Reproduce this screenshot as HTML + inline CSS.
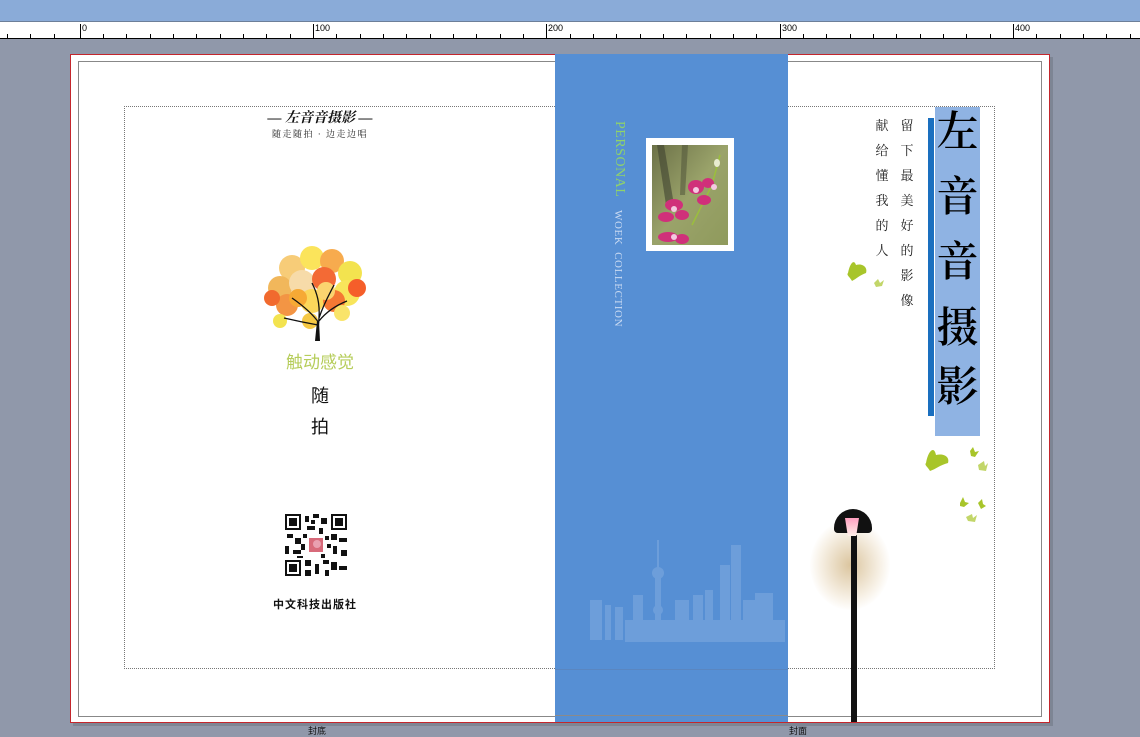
<!DOCTYPE html>
<html><head><meta charset="utf-8"><style>
*{margin:0;padding:0;box-sizing:border-box}
body{width:1140px;height:737px;overflow:hidden;background:#9098aa;position:relative;font-family:"Liberation Serif","Noto Serif CJK SC",serif}
.a{position:absolute}
.v{position:absolute;font-size:13px;line-height:25px;width:16px;text-align:center;color:#222}
.big{position:absolute;left:935px;width:45px;text-align:center;font-size:42px;line-height:65px;color:#000;font-weight:600;font-family:"Noto Serif CJK SC",serif}
</style></head><body>
<div class="a" style="left:0;top:0;width:1140px;height:21px;background:#8aabd8"></div>
<div class="a" style="left:0;top:21px;width:1140px;height:1px;background:#6d7f99"></div>
<svg class="a" style="left:0;top:22px" width="1140" height="17">
<rect width="1140" height="17" fill="#fff"/>
<line x1="0" y1="16.5" x2="1140" y2="16.5" stroke="#000"/>
<g stroke="#000" stroke-width="1">
<path d="M7.5 12V16M30.5 12V16M54.5 12V16M103.5 12V16M126.5 12V16M150.5 12V16M173.5 12V16M196.5 12V16M220.5 12V16M243.5 12V16M266.5 12V16M290.5 12V16M336.5 12V16M360.5 12V16M383.5 12V16M406.5 12V16M430.5 12V16M453.5 12V16M476.5 12V16M500.5 12V16M523.5 12V16M570.5 12V16M593.5 12V16M616.5 12V16M640.5 12V16M663.5 12V16M686.5 12V16M710.5 12V16M733.5 12V16M756.5 12V16M803.5 12V16M826.5 12V16M850.5 12V16M873.5 12V16M896.5 12V16M920.5 12V16M943.5 12V16M966.5 12V16M990.5 12V16M1036.5 12V16M1060.5 12V16M1083.5 12V16M1106.5 12V16M1130.5 12V16"/>
<path d="M80.5 2V16M313.5 2V16M546.5 2V16M780.5 2V16M1013.5 2V16"/>
</g>
<g font-family="Liberation Sans" font-size="9" fill="#000"><text x="82" y="9">0</text><text x="315" y="9">100</text><text x="548" y="9">200</text><text x="782" y="9">300</text><text x="1015" y="9">400</text></g>
</svg>
<div class="a" style="left:73px;top:57px;width:980px;height:669px;background:#7d8594"></div>
<div class="a" style="left:70px;top:54px;width:980px;height:669px;background:#fff;border:1.5px solid #c4262c"></div>
<div class="a" style="left:78px;top:61px;width:964px;height:656px;border:1px solid #888"></div>
<div class="a" style="left:124px;top:106px;width:871px;height:563px;border:1px dotted #777"></div>
<div class="a" style="left:555px;top:54px;width:233px;height:668px;background:#568fd4"></div>
<div class="a" style="left:555px;top:669px;width:233px;height:1px;background:#5a86c0"></div>
<div class="a" style="left:555px;top:715px;width:233px;height:1px;background:#8a8a8a"></div>
<div class="a" style="left:555px;top:722px;width:233px;height:1px;background:#c4262c"></div>
<div class="a" style="left:611px;top:121px;font-size:14px;color:#8fd36a;writing-mode:vertical-rl;letter-spacing:0.5px">PERSONAL</div>
<div class="a" style="left:612px;top:210px;font-size:11px;color:#c9daf2;writing-mode:vertical-rl;letter-spacing:0.6px">WOEK&nbsp;&nbsp;COLLECTION</div>
<div class="a" style="left:646px;top:138px;width:88px;height:113px;background:#fff"></div>
<svg class="a" style="left:652px;top:145px" width="76" height="100">
<defs><linearGradient id="bg" x1="0" y1="0" x2="1" y2="1"><stop offset="0" stop-color="#6c7148"/><stop offset=".5" stop-color="#9aa36a"/><stop offset="1" stop-color="#8f9a5c"/></linearGradient></defs>
<rect width="76" height="100" fill="url(#bg)"/>
<path d="M5 0 L12 0 L22 60 L14 60Z" fill="#3f4230" opacity=".6"/>
<path d="M30 0 L36 0 L33 50 L28 50Z" fill="#4a4d35" opacity=".5"/>
<path d="M68 10 L60 40 L40 80" stroke="#9bbf3c" stroke-width="1.5" fill="none"/>
<g fill="#d0307a"><ellipse cx="22" cy="60" rx="9" ry="6"/><ellipse cx="14" cy="72" rx="8" ry="5"/><ellipse cx="30" cy="70" rx="7" ry="5"/><ellipse cx="44" cy="42" rx="8" ry="7"/><ellipse cx="52" cy="55" rx="7" ry="5"/><ellipse cx="56" cy="38" rx="6" ry="5"/><ellipse cx="16" cy="92" rx="10" ry="5"/><ellipse cx="30" cy="94" rx="7" ry="5"/></g>
<g fill="#f3c9e0"><circle cx="22" cy="64" r="3"/><circle cx="44" cy="45" r="3"/><circle cx="62" cy="42" r="3"/><circle cx="22" cy="92" r="3"/></g>
<ellipse cx="65" cy="18" rx="3" ry="4" fill="#e8eccf"/>
</svg>
<svg class="a" style="left:585px;top:535px" width="203" height="110" opacity=".2">
<g fill="#c8dcf6">
<rect x="20" y="70" width="6" height="35"/><rect x="5" y="65" width="12" height="40"/><rect x="30" y="72" width="8" height="33"/>
<rect x="48" y="60" width="10" height="45"/><rect x="72" y="5" width="2" height="45"/><circle cx="73" cy="38" r="6"/><rect x="70" y="40" width="6" height="65"/><circle cx="73" cy="75" r="5"/>
<rect x="90" y="65" width="14" height="40"/><rect x="108" y="60" width="10" height="45"/><rect x="120" y="55" width="8" height="50"/>
<rect x="135" y="30" width="10" height="75"/><rect x="146" y="10" width="10" height="95"/><rect x="158" y="65" width="12" height="40"/><rect x="170" y="58" width="18" height="47"/><rect x="40" y="85" width="160" height="22"/>
</g></svg>
<div class="a" style="left:230px;top:107px;width:180px;text-align:center;font-size:14px;font-weight:bold;font-style:italic;color:#111">— 左音音摄影 —</div>
<div class="a" style="left:230px;top:127px;width:180px;text-align:center;font-size:9px;color:#222;letter-spacing:1.5px">随走随拍 · 边走边唱</div>
<svg class="a" style="left:262px;top:243px" width="106" height="100">
<g opacity=".9">
<circle cx="30" cy="25" r="13" fill="#f7c76a"/><circle cx="50" cy="15" r="12" fill="#fbe24a"/><circle cx="70" cy="18" r="12" fill="#f7a33b"/><circle cx="88" cy="30" r="12" fill="#f2e13d"/>
<circle cx="18" cy="45" r="12" fill="#f0b04a"/><circle cx="40" cy="40" r="13" fill="#f7d8a0"/><circle cx="62" cy="36" r="12" fill="#f25a20"/><circle cx="85" cy="50" r="13" fill="#f8e34a"/>
<circle cx="25" cy="62" r="11" fill="#f28a30"/><circle cx="50" cy="58" r="12" fill="#fbd34a"/><circle cx="72" cy="58" r="11" fill="#f46a1f"/><circle cx="95" cy="45" r="9" fill="#f54d14"/>
<circle cx="10" cy="55" r="8" fill="#f05a18"/><circle cx="48" cy="78" r="8" fill="#f5c330"/><circle cx="18" cy="78" r="7" fill="#f2e13d"/><circle cx="80" cy="70" r="8" fill="#f9e25a"/>
<circle cx="36" cy="55" r="9" fill="#f6a020"/><circle cx="64" cy="48" r="9" fill="#fbd060"/>
</g>
<path d="M55 98 L57 75 M57 80 C50 70 40 62 30 55 M57 78 C65 68 75 62 85 58 M56 82 C45 80 35 78 22 75 M57 75 C58 60 55 50 50 40 M57 75 C62 60 68 50 72 42" stroke="#111" stroke-width="1.3" fill="none"/>
<path d="M53 98 L58 98 L57 78 L55 78Z" fill="#111"/>
</svg>
<div class="a" style="left:250px;top:348px;width:140px;text-align:center;font-size:17px;color:#b6cd5a;font-family:'Noto Sans CJK SC',sans-serif">触动感觉</div>
<div class="a" style="left:300px;top:380px;width:40px;text-align:center;font-size:18px;line-height:31px;color:#111;font-family:'Noto Sans CJK SC',sans-serif">随<br>拍</div>
<svg class="a" style="left:285px;top:514px" width="62" height="62">
<rect width="62" height="62" fill="#fff"/>
<g fill="#111"><rect x="0" y="0" width="16" height="16"/><rect x="46" y="0" width="16" height="16"/><rect x="0" y="46" width="16" height="16"/></g>
<g fill="#fff"><rect x="2" y="2" width="12" height="12"/><rect x="48" y="2" width="12" height="12"/><rect x="2" y="48" width="12" height="12"/></g>
<g fill="#111"><rect x="4" y="4" width="8" height="8"/><rect x="50" y="4" width="8" height="8"/><rect x="4" y="50" width="8" height="8"/>
<rect x="20" y="2" width="4" height="6"/><rect x="28" y="0" width="6" height="4"/><rect x="36" y="4" width="6" height="6"/><rect x="22" y="12" width="8" height="4"/><rect x="34" y="14" width="4" height="6"/>
<rect x="2" y="20" width="6" height="4"/><rect x="10" y="24" width="6" height="6"/><rect x="0" y="32" width="4" height="8"/><rect x="8" y="36" width="8" height="4"/>
<rect x="46" y="20" width="6" height="6"/><rect x="54" y="24" width="8" height="4"/><rect x="48" y="32" width="4" height="8"/><rect x="56" y="36" width="6" height="6"/>
<rect x="20" y="46" width="6" height="6"/><rect x="30" y="50" width="4" height="10"/><rect x="38" y="46" width="6" height="4"/><rect x="46" y="48" width="6" height="8"/><rect x="54" y="52" width="8" height="4"/><rect x="40" y="56" width="4" height="6"/><rect x="20" y="56" width="6" height="6"/><rect x="18" y="20" width="4" height="4"/><rect x="40" y="22" width="4" height="4"/>
<rect x="26" y="6" width="4" height="4"/><rect x="16" y="30" width="4" height="6"/><rect x="42" y="30" width="4" height="4"/><rect x="12" y="42" width="6" height="2"/><rect x="36" y="40" width="4" height="4"/></g>
<rect x="24" y="24" width="14" height="14" fill="#d86a7a"/><circle cx="32" cy="30" r="4" fill="#e9a0b0"/>
</svg>
<div class="a" style="left:240px;top:596px;width:150px;text-align:center;font-size:11px;font-weight:bold;letter-spacing:1px;color:#111;font-family:'Noto Sans CJK SC',sans-serif">中文科技出版社</div>
<div class="a" style="left:935px;top:107px;width:45px;height:329px;background:#8fb3e3"></div>
<div class="a" style="left:928px;top:118px;width:6px;height:298px;background:#1a6fbf"></div>
<div class="big" style="top:97px">左</div>
<div class="big" style="top:162px">音</div>
<div class="big" style="top:227px">音</div>
<div class="big" style="top:293px">摄</div>
<div class="big" style="top:352px">影</div>
<div class="v" style="left:899px;top:113px">留<br>下<br>最<br>美<br>好<br>的<br>影<br>像</div>
<div class="v" style="left:874px;top:113px">献<br>给<br>懂<br>我<br>的<br>人</div>
<svg class="a" style="left:840px;top:255px" width="160" height="280">
<g fill="#a8c52a">
<path d="M8 18 C10 8 14 4 16 10 C22 8 28 12 26 18 C20 20 16 24 12 26 C10 22 6 20 8 18Z"/>
<path d="M34 28 l4 -4 l2 4 l4 -3 l-2 6 l-6 1Z" opacity=".7"/>
<path d="M86 208 C88 196 94 190 96 200 C104 198 110 202 108 208 C100 210 96 214 90 216 C88 212 84 210 86 208Z"/>
<path d="M130 196 l3 -4 l2 5 l4 -1 l-4 6 l-4 -1Z"/>
<path d="M138 210 l6 -4 l1 5 l3 -3 l-2 8 l-7 -1Z" opacity=".7"/>
<path d="M120 248 l3 -6 l2 5 l4 1 l-5 4 l-4 -1Z"/>
<path d="M138 248 l4 -4 l1 5 l3 2 l-5 3Z"/>
<path d="M126 262 l6 -3 l1 4 l4 -3 l-2 7 l-7 -1Z" opacity=".7"/>
</g></svg>
<div class="a" style="left:810px;top:520px;width:80px;height:90px;border-radius:50%;background:radial-gradient(ellipse at center,rgba(190,150,80,.55),rgba(220,190,140,.2) 55%,rgba(255,255,255,0) 72%)"></div>
<div class="a" style="left:851px;top:535px;width:6px;height:187px;background:#111"></div>
<div class="a" style="left:834px;top:509px;width:38px;height:24px;border-radius:20px 20px 4px 4px;background:#111"></div>
<div class="a" style="left:845px;top:518px;width:14px;height:18px;background:linear-gradient(#ff9fc0,#fff0e8);clip-path:polygon(0 0,100% 0,80% 100%,20% 100%)"></div>
<div class="a" style="left:308px;top:724px;font-size:9px;color:#111;font-family:'Noto Sans CJK SC',sans-serif">封底</div>
<div class="a" style="left:789px;top:724px;font-size:9px;color:#111;font-family:'Noto Sans CJK SC',sans-serif">封面</div>
</body></html>
